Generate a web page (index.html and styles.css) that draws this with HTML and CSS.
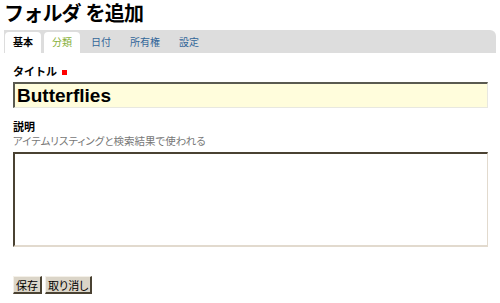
FILE: index.html
```html
<!DOCTYPE html>
<html lang="ja">
<head>
    <meta charset="UTF-8">
    <title>フォルダ を追加</title>
    <link rel="stylesheet" href="styles.css">
</head>
<body>
    <h1 class="page-title">フォルダ を追加</h1>
    <ul class="tabs">
        <li class="tab active">基本</li>
        <li class="tab hover">分類</li>
        <li class="tab">日付</li>
        <li class="tab">所有権</li>
        <li class="tab">設定</li>
    </ul>
    <form class="edit-form">
        <div class="field">
            <label class="field-label">タイトル <span class="required"></span></label>
            <input type="text" class="title-input" value="Butterflies">
        </div>
        <div class="field desc-field">
            <label class="field-label">説明</label>
            <div class="help">アイテムリスティングと検索結果で使われる</div>
            <textarea class="desc-input"></textarea>
        </div>
        <div class="buttons">
            <button type="button" class="btn">保存</button>
            <button type="button" class="btn">取り消し</button>
        </div>
    </form>
</body>
</html>
```

FILE: styles.css
```css
body {
    margin: 0;
    padding: 0 4px;
    font-family: "Liberation Sans", "Noto Sans CJK JP", sans-serif;
    color: #000;
    background: #fff;
}

.page-title {
    font-size: 20px;
    font-weight: bold;
    margin: 0;
    padding: 1px 0 0 0;
    height: 29px;
    line-height: 27px;
    letter-spacing: -0.8px;
}

.tabs {
    list-style: none;
    margin: 0;
    padding: 2px 0 0 1px;
    height: 21px;
    display: flex;
    align-items: flex-end;
    background: #dddddd;
    border-radius: 0 6px 0 0;
}

.tab {
    font-size: 10px;
    color: #336699;
    padding: 0 8px;
    height: 21px;
    line-height: 22px;
    margin-right: 3px;
    border-radius: 4px 4px 0 0;
}

.tab.active {
    background: #fff;
    color: #000;
    font-weight: bold;
}

.tab.hover {
    background: #fff;
    color: #88b03a;
}

.edit-form {
    padding: 0 8px 0 9px;
}

.field {
    margin-top: 12px;
}

.field-label {
    display: block;
    font-size: 11px;
    font-weight: bold;
    line-height: 14px;
}

.required {
    display: inline-block;
    width: 5px;
    height: 5px;
    background: #ff0000;
    margin-left: 2px;
    vertical-align: 1px;
}

.title-input {
    display: block;
    box-sizing: border-box;
    width: 475px;
    height: 26px;
    margin-top: 3px;
    padding: 0 2px;
    font-family: "Liberation Sans", sans-serif;
    font-size: 19px;
    font-weight: bold;
    background: #fffddc;
    border-style: solid;
    border-color: #5a5a50 #e8e8e0 #e8e8e0 #5a5a50;
    border-width: 2px 1px 1px 2px;
}

.desc-field {
    margin-top: 12px;
}

.help {
    font-size: 10.5px;
    color: #777;
    line-height: 15px;
    font-feature-settings: "palt";
}

.desc-input {
    display: block;
    box-sizing: border-box;
    width: 475px;
    height: 95px;
    margin-top: 3px;
    resize: none;
    background: #fff;
    border-style: solid;
    border-width: 2px 1px 2px 2px;
    border-color: #4a4232 #e2dace #e2dace #4a4232;
}

.buttons {
    margin-top: 29px;
    display: flex;
    gap: 3px;
}

.btn {
    font-family: "Noto Sans CJK JP", sans-serif;
    font-size: 11px;
    font-feature-settings: "palt";
    height: 18px;
    padding: 0 2px;
    line-height: 14px;
    background: #dbd5c8;
    border-style: solid;
    border-width: 1px 2px 2px 1px;
    border-color: #f4f0e8 #4a4232 #4a4232 #f4f0e8;
    color: #000;
}
```
